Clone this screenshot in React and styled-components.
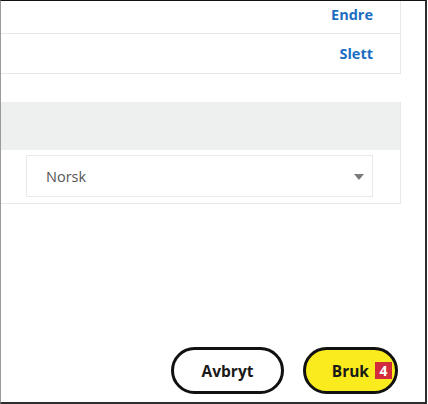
import React from "react";
import styled, { createGlobalStyle } from "styled-components";

const Global = createGlobalStyle`
  html, body { margin: 0; padding: 0; background: #fff; }
  body { font-family: "Open Sans", "Liberation Sans", sans-serif; }
  * { box-sizing: border-box; }
`;

const Frame = styled.div`
  width: 427px;
  height: 404px;
  border-top: 1px solid #111;
  border-left: 1px solid #9a9a9a;
  border-right: 2px solid #2e2e2e;
  border-bottom: 2px solid #2e2e2e;
  display: flex;
  flex-direction: column;
  background: #fff;
`;

const Panel = styled.div`
  width: 400px;
  border-right: 1px solid #e8e8e8;
  border-bottom: 1px solid #e8e8e8;
  margin-top: ${(p) => p.$mt || 0}px;
`;

const ActionRow = styled.div`
  height: ${(p) => p.$h}px;
  display: flex;
  justify-content: flex-end;
  align-items: center;
  padding: 0 27px ${(p) => p.$pb || 0}px 0;
  border-bottom: ${(p) => (p.$last ? "none" : "1px solid #e8e8e8")};
`;

const LinkAction = styled.a`
  color: #1b6ec2;
  font-weight: 700;
  font-size: 14.5px;
  text-decoration: none;
  cursor: pointer;
`;

const SectionHeader = styled.div`
  height: 48px;
  background: #eeefef;
`;

const SectionBody = styled.div`
  height: 53px;
  padding: 5px 27px 0 25px;
`;

const SelectBox = styled.div`
  height: 42px;
  border: 1px solid #e9e9e9;
  display: flex;
  align-items: center;
  justify-content: space-between;
  padding: 0 8px 0 19px;
  color: #555;
  font-size: 14.5px;
`;

const Arrow = styled.span`
  width: 0;
  height: 0;
  border-left: 5px solid transparent;
  border-right: 5px solid transparent;
  border-top: 6px solid #7a7a7a;
  margin-top: 1px;
`;

const Footer = styled.div`
  margin-top: 143px;
  display: flex;
  justify-content: flex-end;
  gap: 19px;
  padding-right: 27px;
`;

const PillButton = styled.button`
  height: 47px;
  width: ${(p) => p.$w}px;
  border: 3px solid #111;
  border-radius: 24px;
  background: ${(p) => (p.$primary ? "#f9eb1d" : "#fff")};
  color: #1a1a1a;
  font-family: "Open Sans", "Liberation Sans", sans-serif;
  font-weight: 700;
  font-size: 15.5px;
  display: flex;
  align-items: center;
  justify-content: ${(p) => (p.$primary ? "flex-end" : "center")};
  padding: ${(p) => (p.$primary ? "0 3px 0 0" : "0")};
  gap: 6px;
  cursor: pointer;
`;

const Badge = styled.span`
  width: 17px;
  height: 17px;
  background: #d22b3c;
  color: #fff;
  font-size: 14px;
  font-weight: 700;
  display: flex;
  align-items: center;
  justify-content: center;
  line-height: 1;
`;

export default function App() {
  return (
    <>
      <Global />
      <Frame>
        <Panel>
          <ActionRow $h={33} $pb={6}>
            <LinkAction>Endre</LinkAction>
          </ActionRow>
          <ActionRow $h={39} $last>
            <LinkAction>Slett</LinkAction>
          </ActionRow>
        </Panel>
        <Panel $mt={28}>
          <SectionHeader />
          <SectionBody>
            <SelectBox>
              <span>Norsk</span>
              <Arrow />
            </SelectBox>
          </SectionBody>
        </Panel>
        <Footer>
          <PillButton $w={113}>Avbryt</PillButton>
          <PillButton $w={95} $primary>
            Bruk
            <Badge>4</Badge>
          </PillButton>
        </Footer>
      </Frame>
    </>
  );
}
